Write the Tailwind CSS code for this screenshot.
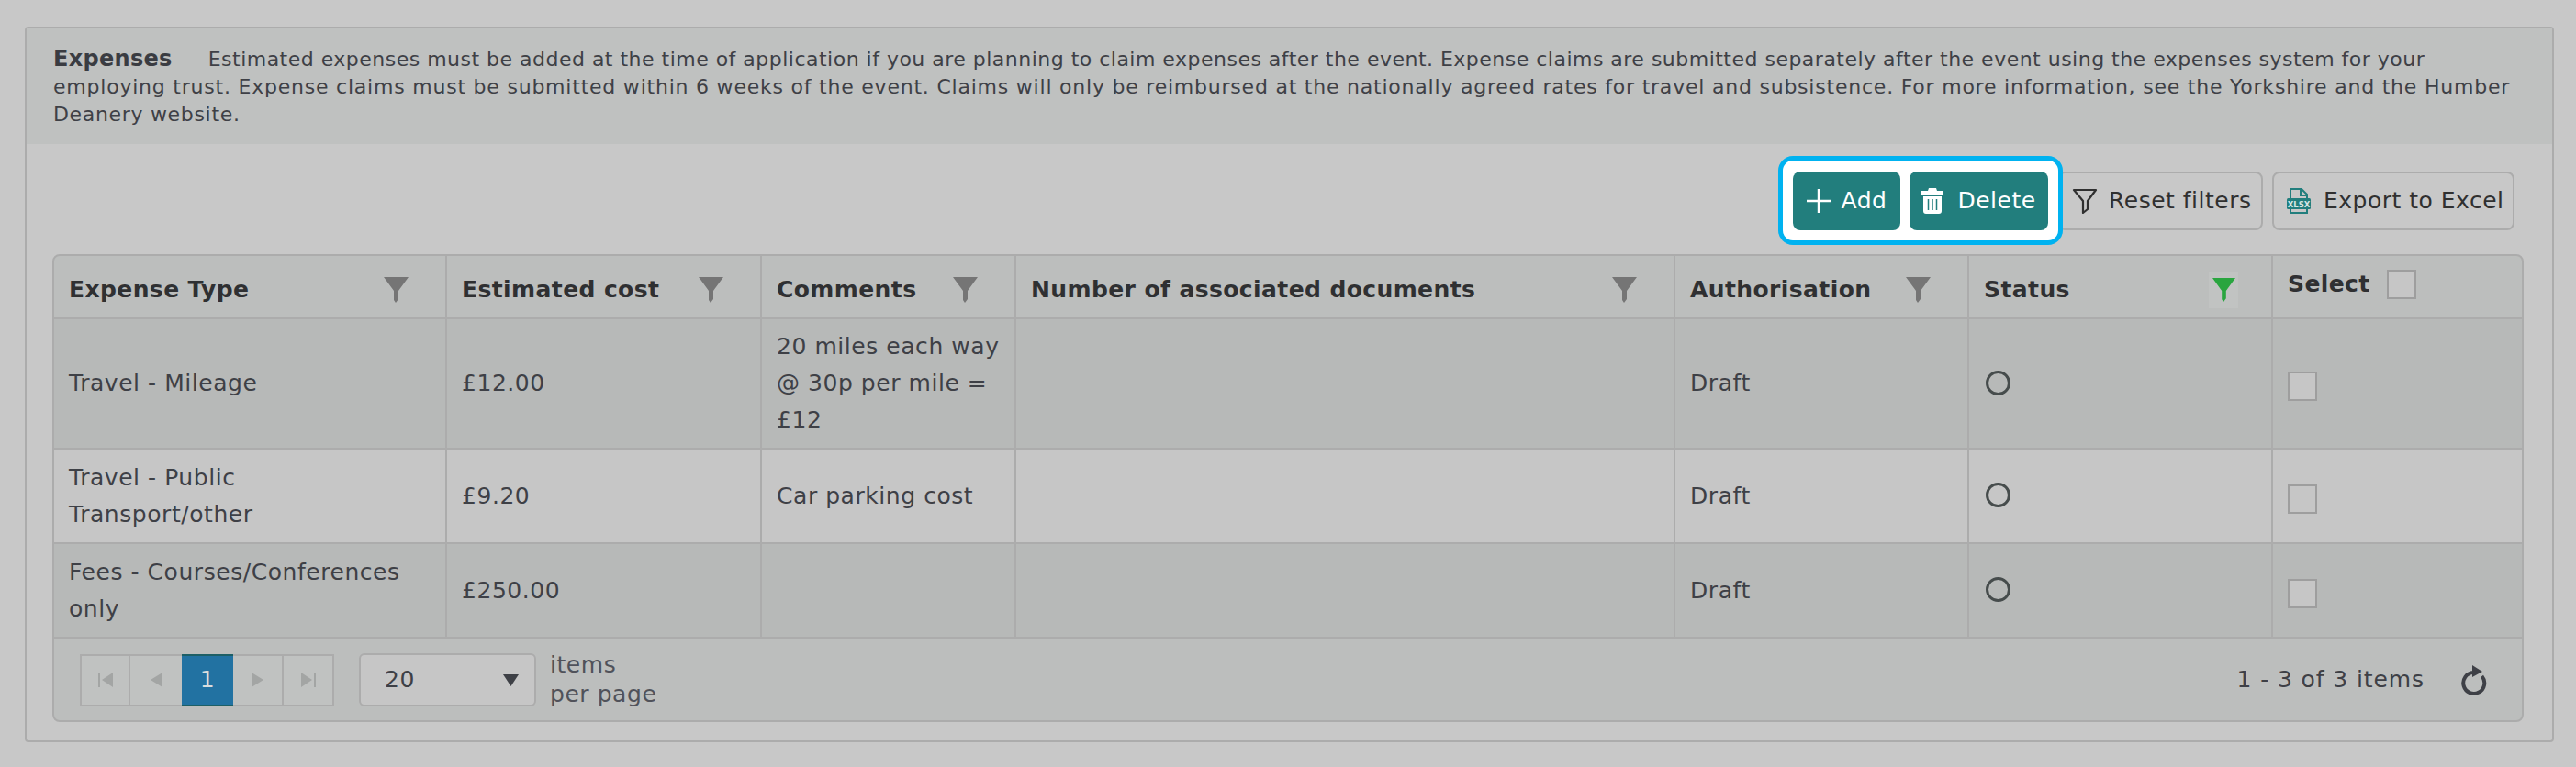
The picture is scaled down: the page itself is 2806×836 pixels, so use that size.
<!DOCTYPE html>
<html lang="en">
<head>
  <meta charset="UTF-8">
  <title>Expenses</title>
  <script src="https://cdn.jsdelivr.net/npm/@tailwindcss/browser@4"></script>
</head>
<body class="bg-[#c8c8c8] font-['DejaVu_Sans',sans-serif] text-[#3e4046] overflow-hidden">

  <div class="w-[2806px] h-[836px] pt-[29px] pl-[27px]">
    <section class="w-[2755px] h-[780px] border-2 border-[#acacac] rounded-[4px]">

      <!-- intro strip -->
      <div class="h-[126px] bg-[#bfc1c0] pl-[29px] pr-[20px] pt-[18px] text-[22px] leading-[30px] whitespace-nowrap">
        <div class="tracking-[0.49px]"><strong class="font-bold text-[24px] tracking-[0.3px] text-[#3a3c42] mr-[39px]">Expenses</strong>Estimated expenses must be added at the time of application if you are planning to claim expenses after the event. Expense claims are submitted separately after the event using the expenses system for your</div>
        <div class="tracking-[0.78px]">employing trust. Expense claims must be submitted within 6 weeks of the event. Claims will only be reimbursed at the nationally agreed rates for travel and subsistence. For more information, see the Yorkshire and the Humber</div>
        <div class="tracking-[0.68px]">Deanery website.</div>
      </div>

      <!-- toolbar -->
      <div class="h-[120px] pt-[30px] pr-[41px] flex justify-end items-start text-[25px] tracking-[0.5px]">
        <div class="relative z-10 -mt-[17px] -mr-[6px] h-[97px] px-[11px] flex items-center gap-[10px] bg-white border-[5px] border-[#00b2f0] rounded-[16px]">
          <button class="h-[64px] w-[117px] bg-[#227e7d] text-white rounded-[8px] flex items-center justify-center gap-[12px]">
            <svg class="w-[26px] h-[26px]" viewBox="0 0 26 26" fill="none" stroke="#fff" stroke-width="2.4"><path d="M13 0v26M0 13h26"/></svg>
            Add
          </button>
          <button class="h-[64px] w-[151px] bg-[#227e7d] text-white rounded-[8px] flex items-center justify-center gap-[15px]">
            <svg class="w-[24px] h-[28px]" viewBox="0 0 24 28" fill="#fff"><path d="M8 0h8l1 3h7v4H0V3h7zM2 9h20v16a3 3 0 0 1-3 3H5a3 3 0 0 1-3-3z"/><path d="M7.500 12v12M12 12v12M16.500 12v12" stroke="#227e7d" stroke-width="1.500"/></svg>
            Delete
          </button>
        </div>
        <button class="w-[224px] h-[64px] border-2 border-[#acacac] rounded-[8px] text-[#303030] flex items-center pl-[14px] gap-[12px]">
          <svg class="w-[28px] h-[28px] shrink-0" viewBox="0 0 28 28" fill="none" stroke="#303030" stroke-width="2.200"><path d="M2 2h24L17 14v9l-5 4V14z" stroke-linejoin="round"/></svg>
          Reset filters
        </button>
        <button class="ml-[10px] w-[264px] h-[64px] border-2 border-[#acacac] rounded-[8px] text-[#303030] flex items-center pl-[14px] gap-[14px]">
          <svg class="w-[26px] h-[30px] shrink-0" viewBox="0 0 26 30" fill="none"><path d="M4 12V2h12l6 6v4M4 24v4h18v-4" stroke="#227e7d" stroke-width="2"/><path d="M15 2v7h7" stroke="#227e7d" stroke-width="2"/><rect x="0" y="12" width="26" height="12" rx="1.500" fill="#227e7d"/><text x="13" y="21.500" text-anchor="middle" font-size="8.500" font-weight="700" fill="#d5e5e4" font-family="DejaVu Sans" letter-spacing="0">XLSX</text></svg>
          Export to Excel
        </button>
      </div>

      <!-- grid -->
      <div class="ml-[28px] w-[2692px] h-[510px] border-2 border-[#acacac] rounded-[8px] overflow-hidden bg-[#bcbebd] text-[25px] leading-[40px] tracking-[0.55px]">
        <table class="table-fixed w-full border-collapse">
          <colgroup>
            <col class="w-[427px]"><col class="w-[343px]"><col class="w-[277px]"><col class="w-[718px]"><col class="w-[320px]"><col class="w-[331px]"><col>
          </colgroup>
          <thead class="text-[#2f3032] text-left">
            <tr class="h-[68px] border-b-2 border-[#acacac]">
              <th class="px-[16px] border-r-2 border-[#acacac]"><div class="flex items-center justify-between pt-[6px] tracking-[0.4px]">Expense Type<svg class="w-[27px] h-[28px] mr-[24px]" viewBox="0 0 27 28" fill="#757575"><path d="M0 0h27L16 15v9l-3 4-2-3V15z"/></svg></div></th>
              <th class="px-[16px] border-r-2 border-[#acacac]"><div class="flex items-center justify-between pt-[6px] tracking-[0.4px]">Estimated cost<svg class="w-[27px] h-[28px] mr-[24px]" viewBox="0 0 27 28" fill="#757575"><path d="M0 0h27L16 15v9l-3 4-2-3V15z"/></svg></div></th>
              <th class="px-[16px] border-r-2 border-[#acacac]"><div class="flex items-center justify-between pt-[6px] tracking-[0.4px]">Comments<svg class="w-[27px] h-[28px] mr-[24px]" viewBox="0 0 27 28" fill="#757575"><path d="M0 0h27L16 15v9l-3 4-2-3V15z"/></svg></div></th>
              <th class="px-[16px] border-r-2 border-[#acacac]"><div class="flex items-center justify-between pt-[6px] tracking-[0.4px]">Number of associated documents<svg class="w-[27px] h-[28px] mr-[24px]" viewBox="0 0 27 28" fill="#757575"><path d="M0 0h27L16 15v9l-3 4-2-3V15z"/></svg></div></th>
              <th class="px-[16px] border-r-2 border-[#acacac]"><div class="flex items-center justify-between pt-[6px] tracking-[0.4px]">Authorisation<svg class="w-[27px] h-[28px] mr-[24px]" viewBox="0 0 27 28" fill="#757575"><path d="M0 0h27L16 15v9l-3 4-2-3V15z"/></svg></div></th>
              <th class="px-[16px] border-r-2 border-[#acacac]"><div class="flex items-center justify-between pt-[6px] tracking-[0.4px]">Status<span class="bg-[#c1c3c2] w-[32px] h-[40px] flex items-center justify-center mr-[20px]"><svg class="w-[25px] h-[28px]" viewBox="0 0 27 28" fill="#29a53f"><path d="M0 0h27L16 15v9l-3 4-2-3V15z"/></svg></span></div></th>
              <th class="px-[16px]"><div class="flex items-center gap-[18px] -mt-[6px] tracking-[0.4px]">Select<span class="w-[32px] h-[32px] border-2 border-[#9e9e9e] bg-[#c6c6c6]"></span></div></th>
            </tr>
          </thead>
          <tbody>
            <tr class="h-[142px] bg-[#b7b9b8] border-b-2 border-[#acacac]">
              <td class="px-[16px] border-r-2 border-[#acacac]">Travel - Mileage</td>
              <td class="px-[16px] border-r-2 border-[#acacac]">£12.00</td>
              <td class="pl-[16px] pr-[8px] border-r-2 border-[#acacac]">20 miles each way @ 30p per mile = £12</td>
              <td class="border-r-2 border-[#acacac]"></td>
              <td class="px-[16px] border-r-2 border-[#acacac]">Draft</td>
              <td class="px-[16px] border-r-2 border-[#acacac]"><span class="block w-[27px] h-[27px] -mt-[2px] ml-[2px] rounded-full border-[3px] border-[#464c4c]"></span></td>
              <td class="px-[16px]"><span class="block w-[32px] h-[32px] mt-[6px] border-2 border-[#9e9e9e] bg-[#c6c6c6]"></span></td>
            </tr>
            <tr class="h-[103px] bg-[#c6c6c6] border-b-2 border-[#acacac]">
              <td class="px-[16px] border-r-2 border-[#acacac]">Travel - Public<br>Transport/other</td>
              <td class="px-[16px] border-r-2 border-[#acacac]">£9.20</td>
              <td class="pl-[16px] pr-[8px] border-r-2 border-[#acacac]">Car parking cost</td>
              <td class="border-r-2 border-[#acacac]"></td>
              <td class="px-[16px] border-r-2 border-[#acacac]">Draft</td>
              <td class="px-[16px] border-r-2 border-[#acacac]"><span class="block w-[27px] h-[27px] -mt-[2px] ml-[2px] rounded-full border-[3px] border-[#464c4c]"></span></td>
              <td class="px-[16px]"><span class="block w-[32px] h-[32px] mt-[6px] border-2 border-[#9e9e9e] bg-[#c6c6c6]"></span></td>
            </tr>
            <tr class="h-[103px] bg-[#b7b9b8] border-b-2 border-[#acacac]">
              <td class="px-[16px] border-r-2 border-[#acacac]">Fees - Courses/Conferences<br>only</td>
              <td class="px-[16px] border-r-2 border-[#acacac]">£250.00</td>
              <td class="border-r-2 border-[#acacac]"></td>
              <td class="border-r-2 border-[#acacac]"></td>
              <td class="px-[16px] border-r-2 border-[#acacac]">Draft</td>
              <td class="px-[16px] border-r-2 border-[#acacac]"><span class="block w-[27px] h-[27px] -mt-[2px] ml-[2px] rounded-full border-[3px] border-[#464c4c]"></span></td>
              <td class="px-[16px]"><span class="block w-[32px] h-[32px] mt-[6px] border-2 border-[#9e9e9e] bg-[#c6c6c6]"></span></td>
            </tr>
          </tbody>
        </table>

        <!-- pager -->
        <div class="h-[90px] pl-[28px] pr-[38px] flex items-center">
          <div class="flex h-[57px] border-2 border-[#acacac] bg-[#c0c2c1]">
            <span class="w-[53px] border-r-2 border-[#acacac] flex items-center justify-center"><svg class="w-[16px] h-[16px]" viewBox="0 0 16 16" fill="#a3a5a4"><path d="M0 0h2v16H0zM16 0v16L4 8z"/></svg></span>
            <span class="w-[56px] flex items-center justify-center"><svg class="w-[13px] h-[16px]" viewBox="0 0 13 16" fill="#a3a5a4"><path d="M13 0v16L0 8z"/></svg></span>
            <span class="w-[56px] -my-[2px] bg-[#2272a2] border-y-2 border-[#1d5f66] text-[#d8dedf] flex items-center justify-center">1</span>
            <span class="w-[55px] border-r-2 border-[#acacac] flex items-center justify-center"><svg class="w-[13px] h-[16px]" viewBox="0 0 13 16" fill="#a3a5a4"><path d="M0 0v16L13 8z"/></svg></span>
            <span class="w-[53px] flex items-center justify-center"><svg class="w-[16px] h-[16px]" viewBox="0 0 16 16" fill="#a3a5a4"><path d="M16 0h-2v16h2zM0 0v16L12 8z"/></svg></span>
          </div>
          <div class="ml-[27px] w-[193px] h-[58px] border-2 border-[#acacac] rounded-[6px] bg-[#c6c6c6] flex items-center justify-between pl-[26px] pr-[17px]">
            20
            <svg class="w-[17px] h-[13px]" viewBox="0 0 17 13" fill="#3e4046"><path d="M0 0h17L8.500 13z"/></svg>
          </div>
          <div class="ml-[15px] leading-[32px] text-[#50525a]">items<br>per page</div>
          <div class="ml-auto tracking-[0.9px]">1 - 3 of 3 items</div>
          <svg class="ml-[38px] w-[30px] h-[34px]" viewBox="0 0 30 34" fill="none"><path d="M15 9A11.500 11.500 0 1 0 24.500 13" stroke="#3e4046" stroke-width="4"/><path d="M14 1l11 7-11 6z" fill="#3e4046"/></svg>
        </div>
      </div>

    </section>
  </div>

</body>
</html>
